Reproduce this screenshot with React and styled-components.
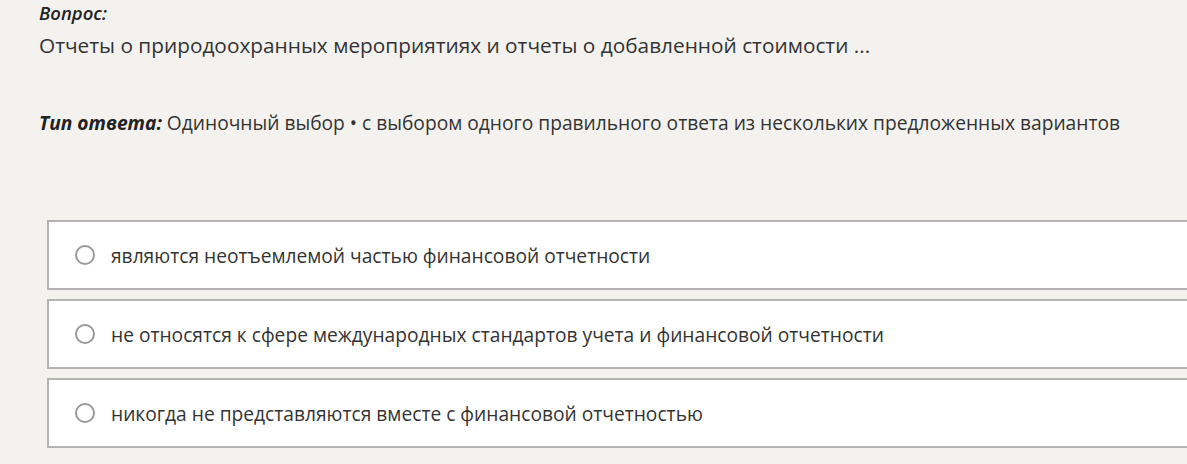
import React, { useState } from 'react'
import styled, { createGlobalStyle } from 'styled-components'

const Global = createGlobalStyle`
  html, body {
    margin: 0;
    padding: 0;
    background: #f3f2ee;
  }
  body {
    font-family: "Open Sans", "Noto Sans", sans-serif;
    color: #333;
  }
`

const Page = styled.div`
  padding: 0 0 0 39px;
  overflow: hidden;
`

const Label = styled.div`
  font-style: italic;
  font-weight: 600;
  font-size: 18.5px;
  line-height: 26px;
  color: #222;
`

const Question = styled.div`
  font-size: 20.8px;
  line-height: 36px;
  margin-top: 1px;
`

const AnswerType = styled.div`
  font-size: 19.2px;
  line-height: 30px;
  margin-top: 45px;
  b {
    font-style: italic;
    font-weight: 700;
    color: #222;
  }
`

const Options = styled.div`
  display: flex;
  flex-direction: column;
  gap: 9px;
  margin: 82px 0 0 8px;
  width: 1160px;
`

const Option = styled.label`
  display: flex;
  align-items: center;
  gap: 16px;
  height: 66px;
  padding-left: 26px;
  background: #fff;
  border: 1px solid #b3b3b3;
  border-width: 2px 0 2px 2px;
  font-size: 19.2px;
  cursor: pointer;
`

const Radio = styled.span`
  width: 20px;
  height: 20px;
  border-radius: 50%;
  border: 2px solid ${p => (p.$checked ? '#3a7bd5' : '#999')};
  box-sizing: border-box;
  display: flex;
  align-items: center;
  justify-content: center;
  flex: 0 0 20px;
  &::after {
    content: '';
    width: 10px;
    height: 10px;
    border-radius: 50%;
    background: ${p => (p.$checked ? '#3a7bd5' : 'transparent')};
  }
`

const answers = [
  'являются неотъемлемой частью финансовой отчетности',
  'не относятся к сфере международных стандартов учета и финансовой отчетности',
  'никогда не представляются вместе с финансовой отчетностью',
]

const App = () => {
  const [picked, setpicked] = useState(null)
  return (
    <Page>
      <Global />
      <Label>Вопрос:</Label>
      <Question>Отчеты о природоохранных мероприятиях и отчеты о добавленной стоимости ...</Question>
      <AnswerType>
        <b>Тип ответа:</b> Одиночный выбор • с выбором одного правильного ответа из нескольких предложенных вариантов
      </AnswerType>
      <Options>
        {answers.map((a, i) => (
          <Option key={i} onClick={() => setpicked(i)}>
            <Radio $checked={picked === i} />
            {a}
          </Option>
        ))}
      </Options>
    </Page>
  )
}

export default App
